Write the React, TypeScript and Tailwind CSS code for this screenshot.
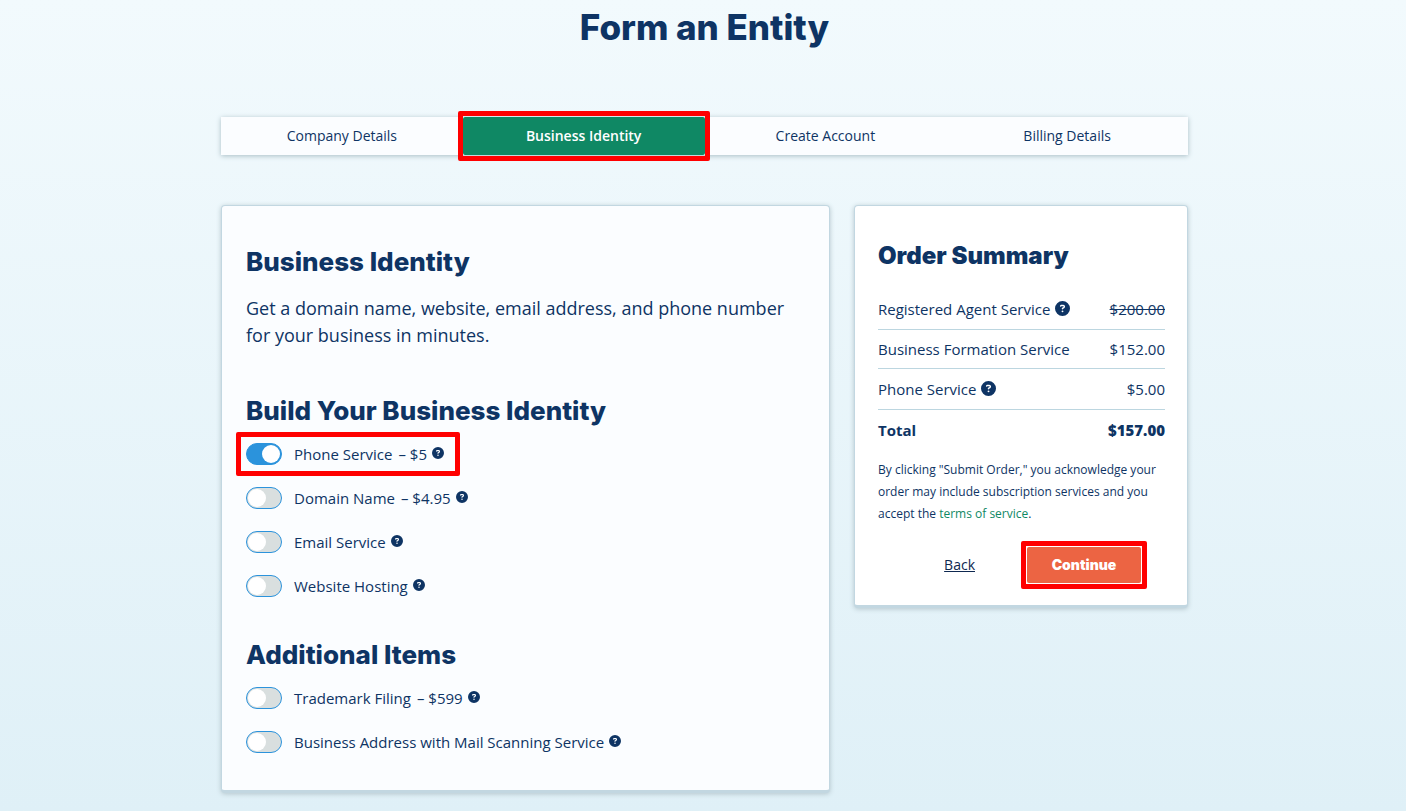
import React, { useState } from "react";
import { FaCircleQuestion } from "react-icons/fa6";

const steps = ["Company Details", "Business Identity", "Create Account", "Billing Details"];

type Service = { id: string; label: string; price?: string };

const identityServices: Service[] = [
  { id: "phone", label: "Phone Service", price: "$5" },
  { id: "domain", label: "Domain Name", price: "$4.95" },
  { id: "email", label: "Email Service" },
  { id: "hosting", label: "Website Hosting" },
];

const additionalServices: Service[] = [
  { id: "trademark", label: "Trademark Filing", price: "$599" },
  { id: "address", label: "Business Address with Mail Scanning Service" },
];

function Help({ about, large = false }: { about: string; large?: boolean }) {
  return (
    <button type="button" aria-label={`About ${about}`} className={large ? "shrink-0 text-[15px]" : "shrink-0 pb-0.5 text-xs"}>
      <FaCircleQuestion />
    </button>
  );
}

function Highlight({ className }: { className: string }) {
  return <span aria-hidden="true" className={`pointer-events-none absolute rounded-xs border-5 border-[#ff0000] ${className}`} />;
}

function ServiceToggle({ service, on, onToggle }: { service: Service; on: boolean; onToggle: () => void }) {
  return (
    <li className="relative flex w-fit items-center">
      <input
        id={service.id}
        type="checkbox"
        role="switch"
        checked={on}
        onChange={onToggle}
        className="flex h-[22px] w-9 shrink-0 cursor-pointer appearance-none items-center rounded-full border border-[#2b93dc] bg-[#d9dfdf] px-px before:size-[18px] before:rounded-full before:bg-white checked:justify-end checked:bg-[#2b93dc]"
      />
      <label htmlFor={service.id} className="mr-[5px] ml-3 flex gap-1.5 text-[15px] leading-[22px]">
        <span>{service.label}</span>
        {service.price && <span>– {service.price}</span>}
      </label>
      <Help about={service.label} />
      {service.id === "phone" && <Highlight className="-inset-y-[11px] -right-4 -left-[10px]" />}
    </li>
  );
}

const heading = "font-['Inter','Liberation_Sans',sans-serif]";

export default function App() {
  const [enabled, setEnabled] = useState<string[]>(["phone"]);
  const toggle = (id: string) =>
    setEnabled((list) => (list.includes(id) ? list.filter((item) => item !== id) : [...list, id]));

  const renderServices = (services: Service[]) => (
    <ul className="mt-4 flex flex-col gap-[22px]">
      {services.map((service) => (
        <ServiceToggle key={service.id} service={service} on={enabled.includes(service.id)} onToggle={() => toggle(service.id)} />
      ))}
    </ul>
  );

  return (
    <div className="min-h-screen bg-linear-to-b from-[#f2fafd] to-[#dff0f7] pb-5 pl-[3px] font-['Open_Sans','Noto_Sans',sans-serif] text-[#0e3464]">
      <main className="mx-auto max-w-[967px]">
        <h1 className={`${heading} pt-[7px] text-center text-[35px] leading-10 font-extrabold`}>Form an Entity</h1>

        <nav aria-label="Progress" className="mt-[70px] bg-[#fbfdff] text-sm shadow-[0_1px_5px_#a9bdc5]">
          <ol className="grid grid-cols-4">
            {steps.map((step) => {
              const active = step === "Business Identity";
              return (
                <li key={step} className="relative">
                  <a
                    href="#"
                    aria-current={active ? "step" : undefined}
                    className={`block py-2 text-center leading-[22px] ${active ? "rounded-xs bg-[#0f8864] font-semibold text-white" : ""}`}
                  >
                    {step}
                  </a>
                  {active && <Highlight className="-inset-x-[5px] -inset-y-[6px]" />}
                </li>
              );
            })}
          </ol>
        </nav>

        <div className="mt-[50px] grid grid-cols-[1fr_334px] items-start gap-6">
          <section className="rounded-sm border border-b-3 border-[#c2d7e1] bg-[#fbfdff] px-6 pt-10 pb-[37px] shadow-[0_1px_5px_#b4c5cc]">
            <h2 className={`${heading} text-[26px] leading-8 font-extrabold`}>Business Identity</h2>
            <p className="mt-[17px] text-lg leading-[27px]">
              Get a domain name, website, email address, and phone number for your business in minutes.
            </p>
            <h2 className={`${heading} mt-[46px] text-[26px] leading-8 font-extrabold`}>Build Your Business Identity</h2>
            {renderServices(identityServices)}
            <h2 className={`${heading} mt-[42px] text-[26px] leading-8 font-extrabold`}>Additional Items</h2>
            {renderServices(additionalServices)}
          </section>

          <aside className="rounded-sm border border-b-3 border-[#c2d7e1] bg-white pt-[34px] pr-[22px] pb-[22px] pl-[23px] shadow-[0_1px_5px_#b4c5cc]">
            <h2 className={`${heading} text-2xl leading-8 font-black`}>Order Summary</h2>
            <table className="mt-[17px] w-full text-[15px] leading-[22px]">
              <tbody>
                <tr className="h-10 border-b border-[#bcd6e0]">
                  <th scope="row" className="text-left font-normal">
                    <span className="flex items-center gap-[5px]">Registered Agent Service <Help about="Registered Agent Service" large /></span>
                  </th>
                  <td className="text-right"><s>$200.00</s></td>
                </tr>
                <tr className="h-[39px] border-b border-[#bcd6e0]">
                  <th scope="row" className="text-left font-normal">Business Formation Service</th>
                  <td className="text-right">$152.00</td>
                </tr>
                <tr className="h-[41px] border-b border-[#bcd6e0]">
                  <th scope="row" className="text-left font-normal">
                    <span className="flex items-center gap-[5px]">Phone Service <Help about="Phone Service" large /></span>
                  </th>
                  <td className="text-right">$5.00</td>
                </tr>
                <tr className="h-[42px] font-extrabold">
                  <th scope="row" className="text-left">Total</th>
                  <td className="text-right">$157.00</td>
                </tr>
              </tbody>
            </table>
            <p className="mt-2 text-xs leading-[22px]">
              By clicking "Submit Order," you acknowledge your order may include subscription services and you accept the{" "}
              <a href="#" className="text-[#0f8864]">terms of service</a>.
            </p>
            <div className="mt-[22px] flex items-center justify-end gap-[52px] pr-6">
              <button type="button" className="text-sm text-[#0e2850] underline">Back</button>
              <div className="relative">
                <button type="button" className={`${heading} h-9 w-[114px] rounded-xs bg-[#ec6443] text-sm font-black text-white`}>Continue</button>
                <Highlight className="-inset-x-[6px] -inset-y-[6px]" />
              </div>
            </div>
          </aside>
        </div>
      </main>
    </div>
  );
}
